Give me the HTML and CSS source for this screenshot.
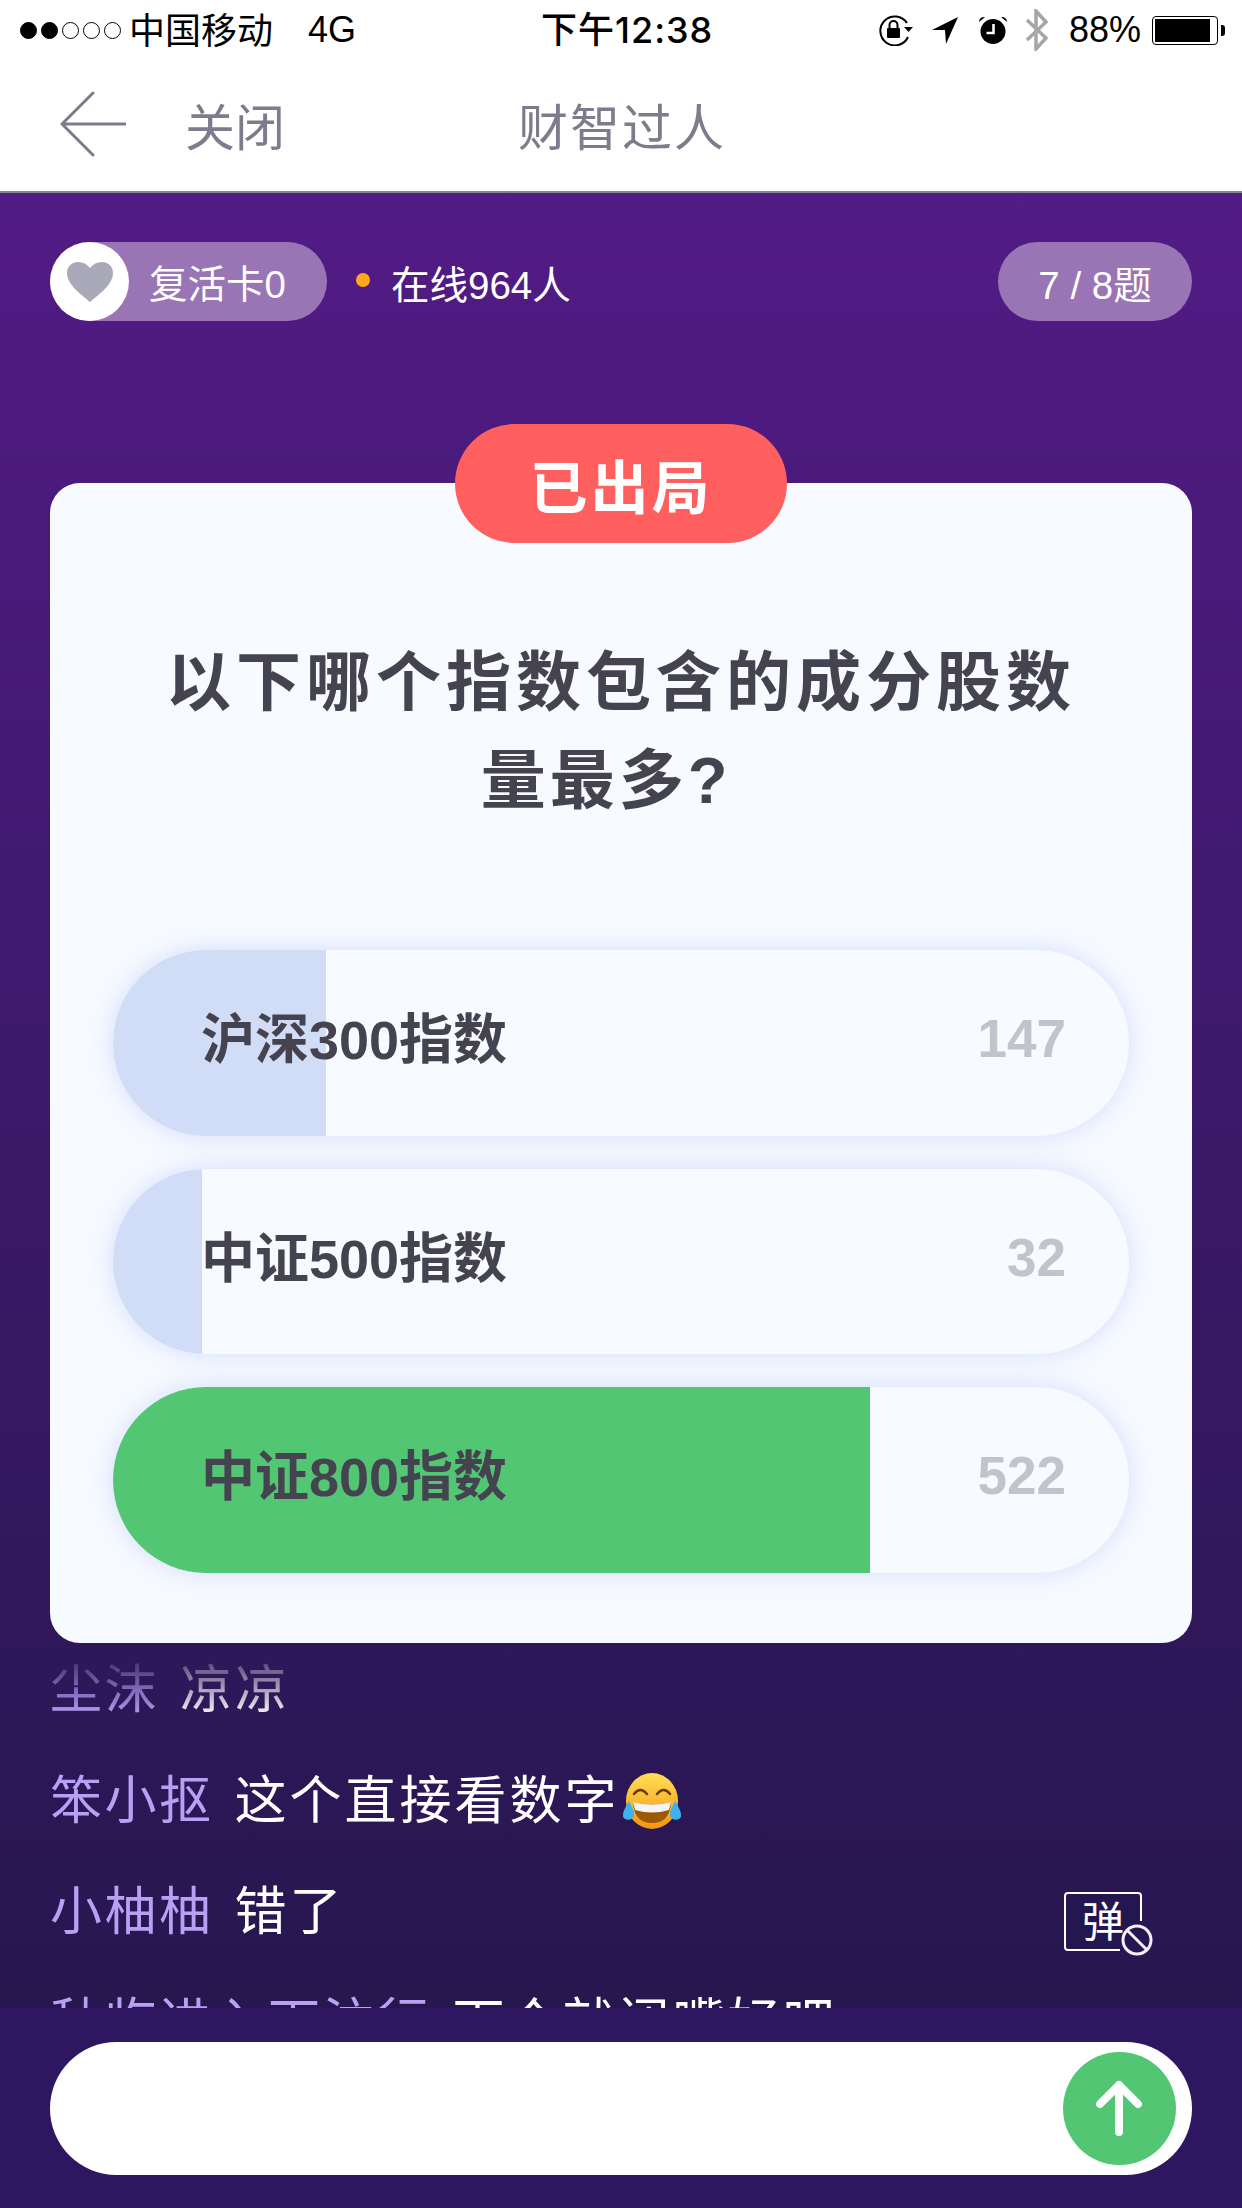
FILE: index.html
```html
<!DOCTYPE html>
<html lang="zh-CN">
<head>
    <meta charset="UTF-8">
    <title>财智过人</title>
    <link rel="stylesheet" href="styles.css">
</head>
<body>
    <div class="status-bar">
        <div class="status-left">
            <span class="signal">
                <i class="dot on"></i><i class="dot on"></i><i class="dot"></i><i class="dot"></i><i class="dot"></i>
            </span>
            <span class="carrier">中国移动</span>
            <span class="network">4G</span>
        </div>
        <div class="status-time">下午12:38</div>
        <div class="status-right">
            <svg class="icon-lock" width="36" height="32" viewBox="0 0 36 32">
                <path d="M29 9A14.500 14.500 0 1 0 30 23" fill="none" stroke="#000" stroke-width="2"/>
                <path d="M26 13h9l-4.500 5z" fill="#000"/>
                <rect x="9" y="14" width="13" height="10" rx="1" fill="#000"/>
                <path d="M11.500 14v-3a4 4 0 0 1 8 0v3" fill="none" stroke="#000" stroke-width="2"/>
            </svg>
            <svg class="icon-location" width="28" height="30" viewBox="0 0 28 30">
                <path d="M1 15L27 2L15 29L14 15z" fill="#000"/>
            </svg>
            <svg class="icon-alarm" width="30" height="30" viewBox="0 0 30 30">
                <circle cx="15" cy="16.500" r="12.500" fill="#000"/>
                <path d="M1 7a5 5 0 0 1 6-5zM29 7a5 5 0 0 0-6-5z" fill="#000"/>
                <path d="M15.500 9v9h-7" fill="none" stroke="#fff" stroke-width="2.500"/>
            </svg>
            <svg class="icon-bt" width="24" height="42" viewBox="0 0 24 42">
                <path d="M2 11L21 29L11 40V2L21 13L2 31" fill="none" stroke="#a6a6a6" stroke-width="3.500"/>
            </svg>
            <span class="battery-text">88%</span>
            <span class="battery"><span class="battery-level"></span></span>
            <span class="battery-nub"></span>
        </div>
    </div>

    <div class="nav-bar">
        <svg class="back-icon" width="66" height="66" viewBox="0 0 66 66">
            <path d="M33 2L2 33L33 64M2 33H65" fill="none" stroke="#7d7c8c" stroke-width="3" stroke-linecap="round" stroke-linejoin="round"/>
        </svg>
        <span class="nav-close">关闭</span>
        <span class="nav-title">财智过人</span>
    </div>

    <div class="game">
        <div class="top-row">
            <div class="revive-pill">
                <span class="heart-circle">
                    <svg width="46" height="40" viewBox="0 0 46 40">
                        <path d="M23 40C15 33 0 23 0 11C0 4 5 0 11 0C16 0 20 2 23 6C26 2 30 0 35 0C41 0 46 4 46 11C46 23 31 33 23 40z" fill="#aaa9ba"/>
                    </svg>
                </span>
                <span class="revive-text">复活卡0</span>
            </div>
            <div class="online">
                <i class="online-dot"></i>
                <span>在线964人</span>
            </div>
            <div class="progress-pill">7 / 8题</div>
        </div>

        <div class="card">
            <div class="out-badge">已出局</div>
            <h2 class="question">以下哪个指数包含的成分股数<br><span class="question-end">量最多?</span></h2>
            <div class="options">
                <div class="option">
                    <div class="fill" style="width: 213px"></div>
                    <span class="option-name">沪深300指数</span>
                    <span class="option-count">147</span>
                </div>
                <div class="option">
                    <div class="fill" style="width: 89px"></div>
                    <span class="option-name">中证500指数</span>
                    <span class="option-count">32</span>
                </div>
                <div class="option">
                    <div class="fill correct" style="width: 757px"></div>
                    <span class="option-name">中证800指数</span>
                    <span class="option-count">522</span>
                </div>
            </div>
        </div>

        <div class="chat-wrap">
            <div class="chat">
                <div class="chat-line"><span class="chat-name">尘沫</span><span>凉凉</span></div>
                <div class="chat-line">
                    <span class="chat-name">笨小抠</span><span>这个直接看数字</span>
                    <svg class="emoji" width="60" height="58" viewBox="0 0 60 58">
                        <defs>
                            <linearGradient id="face" x1="0" y1="0" x2="0" y2="1">
                                <stop offset="0" stop-color="#ffdf55"/>
                                <stop offset="1" stop-color="#f39412"/>
                            </linearGradient>
                        </defs>
                        <ellipse cx="30" cy="29" rx="26" ry="28" fill="url(#face)"/>
                        <path d="M12 22q6-8 13 0M35 22q7-8 13 0" fill="none" stroke="#6b3a08" stroke-width="2.500" stroke-linecap="round"/>
                        <path d="M11 30Q30 35 49 30Q48 51 30 51Q12 51 11 30z" fill="#9c5804"/>
                        <path d="M11 30Q30 35 49 30L47 38Q30 43 13 38z" fill="#f4f4f4"/>
                        <path d="M7 29Q11 37 12 41A6 6 0 0 1 1 45Q0 40 7 29zM53 29Q49 37 48 41A6 6 0 0 0 59 45Q60 40 53 29z" fill="#3fb0f0"/>
                    </svg>
                </div>
                <div class="chat-line"><span class="chat-name">小柚柚</span><span>错了</span></div>
                <div class="chat-line"><span class="chat-name">秋临进入下注行</span><span>下个就闭嘴好吧</span></div>
            </div>
            <svg class="danmu-icon" width="89" height="65" viewBox="0 0 89 65">
                <rect x="1" y="1" width="76" height="57" rx="3" fill="#241650"/>
                <path d="M77 29V4a3 3 0 0 0-3-3H4a3 3 0 0 0-3 3V55a3 3 0 0 0 3 3H56" fill="none" stroke="#fff" stroke-width="2"/>
                <text class="danmu-text" x="18" y="45">弹</text>
                <circle cx="73" cy="48" r="14" fill="#241650" stroke="#f2f0f6" stroke-width="3"/>
                <path d="M63 38L83 58" stroke="#f2f0f6" stroke-width="3"/>
            </svg>
        </div>
    </div>

    <div class="footer">
        <div class="input-bar">
            <button class="send-button">
                <svg width="48" height="56" viewBox="0 0 48 56">
                    <path d="M24 52V5M5 24L24 5L43 24" fill="none" stroke="#fff" stroke-width="8" stroke-linecap="round" stroke-linejoin="round"/>
                </svg>
            </button>
        </div>
    </div>
</body>
</html>
```

FILE: styles.css
```css
* {
    box-sizing: border-box;
}

html, body {
    margin: 0;
    padding: 0;
}

body {
    width: 1242px;
    height: 2208px;
    overflow: hidden;
    font-family: "Liberation Sans", "Noto Sans CJK SC", sans-serif;
    background-color: #ffffff;
}

.status-bar {
    height: 60px;
    display: flex;
    align-items: center;
    justify-content: space-between;
    padding: 0 17px 0 20px;
    font-size: 36px;
    color: #000000;
    position: relative;
}

.status-left {
    display: flex;
    align-items: center;
    margin-top: -4px;
}

.signal {
    display: flex;
    gap: 4px;
    margin-top: 4px;
    margin-right: 8px;
}

.dot {
    width: 17px;
    height: 17px;
    border-radius: 50%;
    border: 1.5px solid #000000;
}

.dot.on {
    background-color: #000000;
}

.network {
    margin-left: 35px;
    margin-top: 3px;
}

.status-time {
    position: absolute;
    left: 541px;
    top: 8px;
    font-family: Inter, "Noto Sans CJK SC", sans-serif;
    font-size: 36px;
    font-weight: 500;
    line-height: 44px;
    letter-spacing: 1px;
}

.status-right {
    display: flex;
    align-items: center;
}

.icon-location {
    margin-left: 17px;
}

.icon-alarm {
    margin-left: 19px;
}

.icon-bt {
    margin-left: 17px;
}

.battery-text {
    margin-left: 20px;
    font-size: 36px;
}

.battery {
    width: 66px;
    height: 29px;
    margin-left: 11px;
    border: 1px solid #000000;
    border-radius: 4px;
    padding: 2px;
    display: flex;
}

.battery-level {
    width: 92%;
    background-color: #000000;
}

.battery-nub {
    width: 4px;
    height: 11px;
    margin-left: 3px;
    background-color: #000000;
    border-radius: 0 3px 3px 0;
}

.nav-bar {
    height: 133px;
    display: flex;
    align-items: center;
    padding-left: 60px;
    padding-bottom: 3px;
    position: relative;
    color: #7d7c8c;
    border-bottom: 2px solid #85848f;
}

.nav-close {
    margin-left: 59px;
    font-size: 50px;
}

.nav-title {
    position: absolute;
    left: 518px;
    font-size: 50px;
    letter-spacing: 2px;
}

.game {
    height: 1815px;
    padding: 49px 50px 0;
    background: linear-gradient(180deg, #521b85 0%, #26174f 100%);
}

.top-row {
    display: flex;
    align-items: center;
    height: 79px;
    color: #ffffff;
    font-size: 38px;
}

.revive-pill {
    width: 277px;
    height: 79px;
    display: flex;
    align-items: center;
    border-radius: 40px;
    background-color: #9975b5;
}

.heart-circle {
    width: 79px;
    height: 79px;
    border-radius: 50%;
    background-color: #ffffff;
    display: flex;
    align-items: center;
    justify-content: center;
}

.heart-circle svg {
    margin-top: 1px;
}

.revive-text {
    margin-left: 20px;
    margin-top: -2px;
    font-size: 38.500px;
}

.online {
    display: flex;
    align-items: center;
    margin-left: 29px;
    flex: 1;
}

.online-dot {
    width: 14px;
    height: 14px;
    margin-right: 21px;
    margin-top: -3px;
    border-radius: 50%;
    background-color: #ffa81c;
}

.online span {
    font-size: 38.500px;
}

.progress-pill {
    width: 194px;
    height: 79px;
    display: flex;
    align-items: center;
    justify-content: center;
    border-radius: 40px;
    background-color: #9975b5;
    font-size: 38.500px;
}

.card {
    position: relative;
    height: 1160px;
    margin-top: 162px;
    padding: 151px 63px 0;
    border-radius: 30px;
    background-color: #f7faff;
}

.out-badge {
    position: absolute;
    top: -59px;
    left: 405px;
    width: 332px;
    height: 119px;
    border-radius: 60px;
    background-color: #ff5f5f;
    color: #ffffff;
    font-size: 58px;
    font-weight: 700;
    letter-spacing: 3px;
    display: flex;
    align-items: center;
    justify-content: center;
}

.question {
    margin: 0;
    text-align: center;
    font-size: 65px;
    font-weight: 700;
    line-height: 98px;
    letter-spacing: 5px;
    color: #44434f;
}

.question-end {
    padding-right: 30px;
    letter-spacing: 4px;
}

.options {
    margin-top: 120px;
    display: flex;
    flex-direction: column;
    gap: 33px;
}

.option {
    position: relative;
    height: 185.500px;
    display: flex;
    align-items: center;
    justify-content: space-between;
    padding: 0 63px 8px 88px;
    border-radius: 93px;
    overflow: hidden;
    background-color: #f7faff;
    box-shadow: 0 0 26px rgba(120, 150, 240, 0.28);
    color: #44434f;
}

.fill {
    position: absolute;
    left: 0;
    top: 0;
    bottom: 0;
    background-color: #d1dcf7;
}

.fill.correct {
    background-color: #53c674;
}

.option-name {
    position: relative;
    margin-top: -6px;
    font-size: 54px;
    font-weight: 700;
}

.option-count {
    position: relative;
    font-size: 53px;
    font-weight: 700;
    color: #c0c4cc;
}

.chat-wrap {
    position: relative;
    height: 365px;
}

.chat {
    height: 365px;
    overflow: hidden;
    padding-top: 12px;
    font-size: 52px;
    letter-spacing: 3px;
    color: #ffffff;
    -webkit-mask-image: linear-gradient(180deg, rgba(0, 0, 0, 0.15) 15px, #000000 75px);
    mask-image: linear-gradient(180deg, rgba(0, 0, 0, 0.15) 15px, #000000 75px);
}

.chat-line {
    height: 111px;
    line-height: 70px;
    display: flex;
    align-items: flex-start;
    white-space: nowrap;
}

.chat-name {
    color: #b9a0f5;
    margin-right: 21px;
    letter-spacing: 2.500px;
}

.emoji {
    margin-top: 6px;
    margin-left: 2px;
}

.danmu-icon {
    position: absolute;
    right: 39px;
    top: 249px;
}

.danmu-text {
    font-size: 42px;
    fill: #ffffff;
}

.footer {
    height: 200px;
    padding: 34px 50px 0;
    background-color: #2e1760;
}

.input-bar {
    height: 133px;
    display: flex;
    align-items: center;
    justify-content: flex-end;
    padding-right: 16px;
    border-radius: 67px;
    background-color: #ffffff;
}

.send-button {
    width: 113px;
    height: 113px;
    padding: 0 2px 2px 0;
    border: none;
    border-radius: 50%;
    background-color: #53c674;
    display: flex;
    align-items: center;
    justify-content: center;
}
```
